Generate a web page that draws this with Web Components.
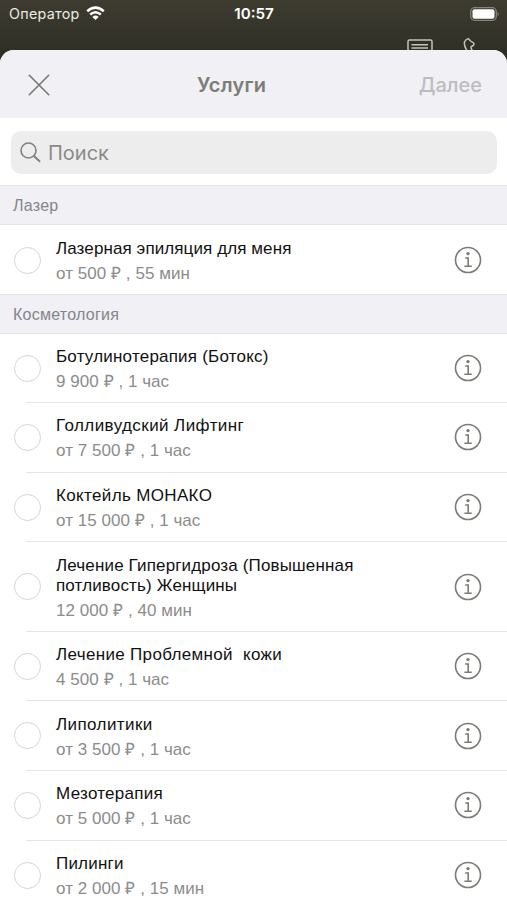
<!DOCTYPE html>
<html lang="ru">
<head>
<meta charset="utf-8">
<title>Услуги</title>
<style>
html,body{margin:0;height:100%;overflow:hidden;background:#fff}
body{font-family:"Liberation Sans",Arial,sans-serif}
</style>
</head>
<body>
<services-screen></services-screen>
<script>
function define(name, html, setup) {
  const template = document.createElement('template');
  template.innerHTML = html;
  customElements.define(name, class extends HTMLElement {
    constructor() {
      super();
      this.attachShadow({ mode: 'open' }).append(template.content.cloneNode(true));
    }
    connectedCallback() { if (setup) setup(this, this.shadowRoot); }
  });
}

define('status-bar', `
<style>
:host{display:grid;grid-template-columns:1fr auto 1fr;align-items:center;height:28px;padding:0 7px 0 9px;box-sizing:border-box;color:#fff;font:14.3px/28px Inter,sans-serif}
.left{display:flex;align-items:center;gap:6px;color:#e9e9e5;letter-spacing:.27px}
.left svg{margin-top:-2px}
.time{font-weight:600;font-size:15.2px;margin-right:1px}
.right{justify-self:end;display:flex;margin-top:-1px}
svg{display:block}
</style>
<div class="left"><span>Оператор</span>
<svg width="19" height="15" viewBox="0 0 19 15" fill="none" stroke="#fff" stroke-width="2.5"><path d="M1.2 5.3Q9.5-2 17.8 5.3M4.2 8.5q5.3-4.4 10.6 0"/><path d="M9.5 14 6.3 10.9q3.2-2.6 6.4 0z" fill="#fff" stroke="none"/></svg></div>
<span class="time">10:57</span>
<div class="right"><svg width="30" height="14" viewBox="0 0 30 14"><rect x=".7" y=".7" width="25.6" height="12.6" rx="4" fill="none" stroke="#85857c" stroke-width="1.3"/><rect x="2.5" y="2.3" width="22" height="9.4" rx="2" fill="#fff"/><path d="M27.6 4.7q2.3 2.3 0 4.6z" fill="#85857c"/></svg></div>`);

define('backdrop-icons', `
<style>:host{display:flex;justify-content:flex-end;gap:28px;padding:8px 30px 0 0;height:22px;box-sizing:border-box;overflow:hidden}svg{flex:none}</style>
<svg width="26" height="24" viewBox="0 0 26 24" fill="none" stroke="#c3c3bc" stroke-width="1.5"><rect x="1" y="4" width="24" height="18" rx="1.5"/><path d="M4.5 8.7h16.5M4.5 12h16.5"/></svg>
<svg width="16" height="24" viewBox="0 0 16 24" fill="none" stroke="#c3c3bc" stroke-width="1.5"><path d="M6.8 16C4.5 12.5 2.6 9 3.6 5.8 4.3 4.2 5.8 3 7.3 2.6L9.6 5l3 2q.7 1.2-.3 2.4l-2.2 1.4q-.3 2.2 2.2 5"/></svg>`);

define('nav-header', `
<style>
:host{display:grid;grid-template-columns:169px 1fr auto;align-items:center;height:68px;padding:1px 25px 0 28px;box-sizing:border-box;background:#f0f0f5;font-family:Inter,sans-serif}
svg{display:block}
h1{margin:0;font-size:20px;font-weight:600;color:#7d7d76;letter-spacing:.25px}
.next{font-size:20px;font-weight:500;color:#bdbdc0}
</style>
<svg width="22" height="22" viewBox="0 0 22 22" stroke="#77776f" stroke-width="1.6" stroke-linecap="round"><path d="M1.3 1.3 20.7 20.7M20.7 1.3 1.3 20.7"/></svg>
<h1><slot></slot></h1><span class="next">Далее</span>`);

define('search-field', `
<style>
:host{display:block;background:#fff;padding:13px 10px 11px 11px}
div{display:flex;align-items:center;gap:7px;height:43px;padding-left:9px;border-radius:10px;background:#ededed;color:#8a8a8a;font:20px/43px Inter,sans-serif}
span{padding-top:2px}
</style>
<div><svg width="21" height="21" viewBox="0 0 21 21" fill="none" stroke="#818181" stroke-linecap="round"><circle cx="8.5" cy="8.5" r="7.5" stroke-width="1.6"/><path d="m14.2 14.2 5.3 5" stroke-width="2"/></svg><span><slot></slot></span></div>`);

define('section-title', `
<style>:host{display:block;box-sizing:border-box;height:40px;padding-left:13px;background:#f0f0f5;border-top:1px solid #e3e3e6;border-bottom:1px solid #e3e3e6;color:#85858a;font:16px/39px "Liberation Sans",Arial,sans-serif;letter-spacing:.25px}</style>
<slot></slot>`);

define('select-circle', `
<style>:host{display:block;width:27px;height:27px;box-sizing:border-box;border:1.5px solid #d5d5d5;border-radius:50%}</style>`);

define('info-button', `
<style>:host{display:block;width:28px;height:28px}svg{display:block}</style>
<svg width="28" height="28" viewBox="0 0 28 28" fill="none" stroke="#7c7c76" stroke-width="1.6"><circle cx="14" cy="14" r="12.5"/><circle cx="14" cy="7.6" r="1.7" fill="#7c7c76" stroke="none"/><path d="M11.2 12h3v8.2M10.4 20.3h7.4"/></svg>`);

define('service-row', `
<style>
:host{display:block;position:relative}
.row{display:grid;grid-template-columns:27px 1fr 28px;column-gap:15px;align-items:center;box-sizing:border-box;height:69.7px;padding:0 25px 0 14px}
:host([tall]) .row{height:89.4px}
:host([compact]) .row{height:69px}
select-circle,info-button{margin-top:-1px}
.text{min-width:0;padding-top:2px}
:host([first]) .text{padding-top:4px}
:host([first]) select-circle,:host([first]) info-button{margin-top:1px}
.name{color:#111;font-size:17px;line-height:20px;white-space:pre}
.price{color:#8c8c8c;font-size:17px;line-height:20px;margin-top:5px;white-space:pre;letter-spacing:.05px}
.line{position:absolute;left:26px;right:0;bottom:0;height:1px;background:#e5e5e5}
:host([last]) .line{display:none}
</style>
<div class="row"><select-circle></select-circle><div class="text"><div class="name"><slot></slot></div><div class="price"></div></div><info-button></info-button></div><div class="line"></div>`,
(host, root) => {
  root.querySelector('.price').textContent = host.getAttribute('price');
  if (host.hasAttribute('spacing')) root.querySelector('.name').style.letterSpacing = host.getAttribute('spacing');
});

define('services-screen', `
<style>
:host{display:block;width:507px;height:900px;overflow:hidden;background:linear-gradient(180deg,#3e3c31,#302f25 50px,#302f25)}
.sheet{border-radius:14px 14px 0 0;overflow:hidden;background:#fff;height:850px}
</style>
<status-bar></status-bar><backdrop-icons></backdrop-icons>
<div class="sheet">
<nav-header>Услуги</nav-header>
<search-field>Поиск</search-field>
<section-title>Лазер</section-title>
<service-row compact first last spacing=".1px" price="от 500 ₽ , 55 мин">Лазерная эпиляция для меня</service-row>
<section-title>Косметология</section-title>
<service-row compact spacing=".21px" price="9 900 ₽ , 1 час">Ботулинотерапия (Ботокс)</service-row>
<service-row spacing=".42px" price="от 7 500 ₽ , 1 час">Голливудский Лифтинг</service-row>
<service-row spacing=".35px" price="от 15 000 ₽ , 1 час">Коктейль МОНАКО</service-row>
<service-row tall spacing=".15px" price="12 000 ₽ , 40 мин">Лечение Гипергидроза (Повышенная
потливость) Женщины</service-row>
<service-row spacing=".33px" price="4 500 ₽ , 1 час">Лечение Проблемной  кожи</service-row>
<service-row spacing=".42px" price="от 3 500 ₽ , 1 час">Липолитики</service-row>
<service-row spacing=".28px" price="от 5 000 ₽ , 1 час">Мезотерапия</service-row>
<service-row last spacing=".2px" price="от 2 000 ₽ , 15 мин">Пилинги</service-row>
</div>`);
</script>
</body>
</html>
